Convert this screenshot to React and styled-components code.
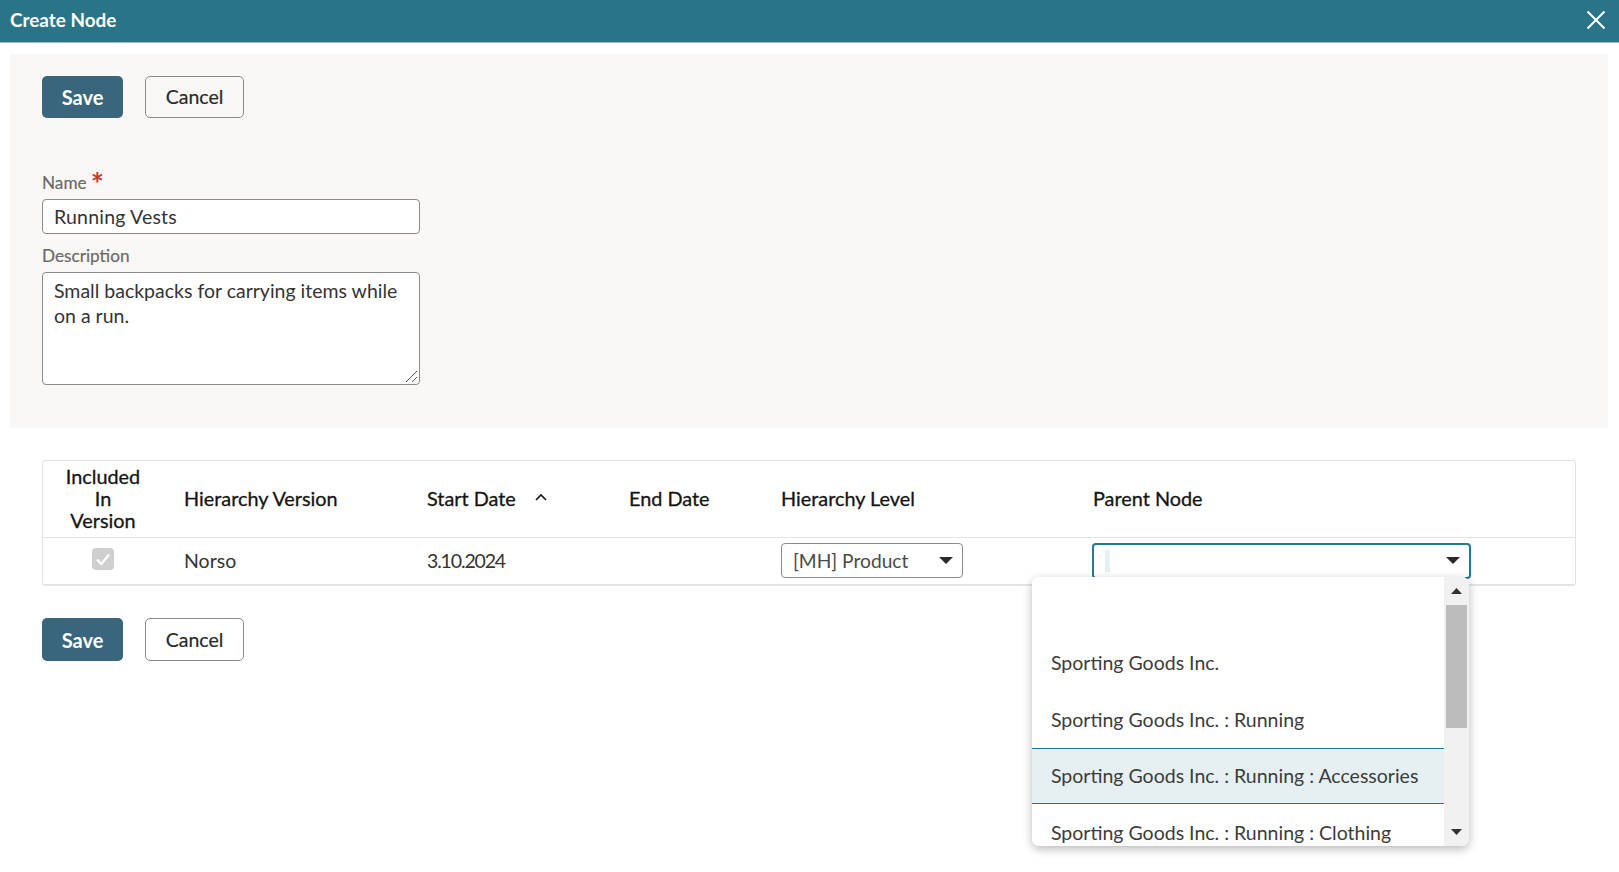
import React from 'react';
import styled, { createGlobalStyle } from 'styled-components';

const GlobalStyle = createGlobalStyle`
  html, body {
    margin: 0;
    padding: 0;
    background: #fff;
    overflow: hidden;
  }
  body {
    font-family: Lato, "Noto Sans", "Liberation Sans", sans-serif;
    color: #353432;
  }
  * {
    box-sizing: border-box;
  }
`;

const Page = styled.div`
  width: 1619px;
  height: 872px;
  display: flex;
  flex-direction: column;
`;

const TitleBar = styled.header`
  height: 43px;
  flex: none;
  display: flex;
  align-items: center;
  justify-content: space-between;
  padding: 0 13px 2px 10px;
  background: #2a7488;
  border-bottom: 1px solid #9db7c6;
`;

const Title = styled.h1`
  margin: -2px 0 0;
  font-size: 18.9px;
  font-weight: 700;
  color: #fff;
`;

const CloseIcon = styled.svg`
  width: 20px;
  height: 20px;
  display: block;
`;

const FormPanel = styled.section`
  margin: 11px 11px 0 10px;
  height: 374px;
  padding: 22px 32px 0;
  background: #f9f8f6;
`;

const Actions = styled.div`
  display: flex;
  gap: 22px;
`;

const BottomActions = styled(Actions)`
  margin: 32px 0 0 42px;
`;

const SaveButton = styled.button`
  width: 81px;
  height: ${({ $tall }) => ($tall ? '43px' : '42px')};
  padding: 0;
  border: 0;
  border-radius: 5px;
  background: #39667d;
  color: #fff;
  font: 700 20px Lato, sans-serif;
`;

const CancelButton = styled.button`
  width: 99px;
  height: ${({ $tall }) => ($tall ? '43px' : '42px')};
  padding: ${({ $tall }) => ($tall ? '0' : '0 0 2px')};
  border: 1px solid #8c8b88;
  border-radius: 5px;
  background: ${({ $tall }) => ($tall ? '#fff' : '#f9f8f6')};
  color: #2b2a28;
  font: 400 19.5px Lato, sans-serif;
  -webkit-text-stroke: 0.2px #2b2a28;
`;

const NameField = styled.div`
  margin-top: 52px;
`;

const Label = styled.div`
  height: 29px;
  font-size: 17.2px;
  color: #6b6a67;
  display: flex;
  align-items: flex-end;
  padding-bottom: 6px;
  -webkit-text-stroke: 0.2px #6b6a67;
`;

const Required = styled.span`
  color: #c0392b;
  font-size: 31px;
  font-weight: 700;
  line-height: 20px;
  margin-left: 4px;
  align-self: flex-start;
  margin-top: 3px;
  -webkit-text-stroke: 0;
`;

const TextBox = styled.div`
  width: 378px;
  height: 35px;
  padding: 0 11px;
  background: #fff;
  border: 1px solid #8c8b88;
  border-radius: 4px;
  display: flex;
  align-items: center;
  font-size: 19.5px;
  letter-spacing: 0.2px;
`;

const DescriptionLabel = styled(Label)`
  margin-top: 8px;
  height: 30px;
`;

const TextArea = styled.div`
  position: relative;
  width: 378px;
  height: 113px;
  padding: 5px 11px;
  background: #fff;
  border: 1px solid #8c8b88;
  border-radius: 4px;
  font-size: 19.5px;
  line-height: 25px;
`;

const Grip = styled.svg`
  position: absolute;
  right: 1px;
  bottom: 1px;
  width: 13px;
  height: 13px;
`;

const TableCard = styled.section`
  margin: 32px 0 0 42px;
  width: 1534px;
  height: 126px;
  border: 1px solid #e4e3e1;
  border-bottom-width: 2px;
  border-radius: 4px;
`;

const Row = styled.div`
  display: grid;
  grid-template-columns: 122px 243px 202px 152px 312px 1fr;
  align-items: center;
  height: ${({ $head }) => ($head ? '77px' : '47px')};
  border-bottom: ${({ $head }) => ($head ? '1px solid #e4e3e1' : '0')};
`;

const HeadCell = styled.div`
  padding: ${({ $center }) => ($center ? '0 2px 2px 0' : '0 0 2px 19px')};
  font-size: 19.85px;
  line-height: 22px;
  color: #161513;
  display: flex;
  align-items: center;
  text-align: ${({ $center }) => ($center ? 'center' : 'left')};
  justify-content: ${({ $center }) => ($center ? 'center' : 'flex-start')};
  -webkit-text-stroke: 0.3px #161513;
`;

const Cell = styled.div`
  padding: ${({ $center }) => ($center ? '0 2px 0 0' : '0 0 0 19px')};
  margin-top: -2px;
  font-size: 19.5px;
  letter-spacing: ${({ $date }) => ($date ? '-1.15px' : '0')};
  display: flex;
  justify-content: ${({ $center }) => ($center ? 'center' : 'flex-start')};
`;

const SortIcon = styled.svg`
  width: 12px;
  height: 8px;
  margin: -2px 0 0 19px;
`;

const CheckIcon = styled.svg`
  width: 22px;
  height: 22px;
  display: block;
  margin-top: -3px;
`;

const SelectCell = styled.div`
  position: relative;
  padding-left: ${({ $parent }) => ($parent ? '18px' : '19px')};
  display: flex;
`;

const Select = styled.div`
  width: ${({ $wide }) => ($wide ? '379px' : '182px')};
  height: ${({ $wide }) => ($wide ? '36px' : '35px')};
  padding: 0 11px;
  margin-top: -2px;
  background: #fff;
  border: ${({ $wide }) => ($wide ? '2px solid #227a95' : '1px solid #8c8b88')};
  border-radius: 4px;
  display: flex;
  align-items: center;
  justify-content: space-between;
  font-size: 19.2px;
  color: #4a4946;
`;

const Caret = styled.svg`
  width: 14px;
  height: 7px;
  flex: none;
  margin-right: -2px;
`;

const Cursor = styled.span`
  width: 5px;
  height: 22px;
  background: #e4f0f2;
`;

const Dropdown = styled.div`
  position: absolute;
  top: 32px;
  left: -42px;
  width: 437px;
  height: 269px;
  background: #fff;
  border-radius: 7px;
  box-shadow: 0 3px 10px rgba(0, 0, 0, 0.28);
  display: flex;
  overflow: hidden;
  z-index: 2;
`;

const Options = styled.div`
  flex: 1;
  min-width: 0;
`;

const Option = styled.div`
  height: ${({ $blank }) => ($blank ? '58px' : '56.5px')};
  padding-left: 19px;
  display: flex;
  align-items: center;
  font-size: 19.5px;
  color: #3d3c39;
  white-space: nowrap;
  background: ${({ $active }) => ($active ? '#e6f0f3' : '#fff')};
  border-top: ${({ $active }) => ($active ? '1px solid #227a95' : '0')};
  border-bottom: ${({ $active }) => ($active ? '1px solid #227a95' : '0')};
`;

const ScrollBar = styled.div`
  width: 25px;
  flex: none;
  background: #f1f1f1;
  padding: 11px 2px 0;
  display: flex;
  flex-direction: column;
  align-items: center;
`;

const ScrollArrow = styled.svg`
  width: 11px;
  height: 6px;
  flex: none;
`;

const ScrollThumb = styled.div`
  width: 21px;
  height: 123px;
  margin-top: 11px;
  background: #bcbcbc;
`;

const ScrollDown = styled(ScrollArrow)`
  margin-top: auto;
  margin-bottom: 11px;
`;

const options = [
  'Sporting Goods Inc.',
  'Sporting Goods Inc. : Running',
  'Sporting Goods Inc. : Running : Accessories',
  'Sporting Goods Inc. : Running : Clothing',
];

const DownCaret = () => (
  <Caret viewBox="0 0 14 7">
    <path d="M0 0h14L7 7z" fill="#2b2a28" />
  </Caret>
);

const App = () => (
  <Page>
    <GlobalStyle />
    <TitleBar>
      <Title>Create Node</Title>
      <CloseIcon viewBox="0 0 20 20">
        <path d="M1.5 1.5l17 17M18.5 1.5l-17 17" stroke="#fff" strokeWidth="2" fill="none" />
      </CloseIcon>
    </TitleBar>

    <FormPanel>
      <Actions>
        <SaveButton>Save</SaveButton>
        <CancelButton>Cancel</CancelButton>
      </Actions>
      <NameField>
        <Label>
          Name<Required>*</Required>
        </Label>
        <TextBox>Running Vests</TextBox>
      </NameField>
      <DescriptionLabel>Description</DescriptionLabel>
      <TextArea>
        Small backpacks for carrying items while on a run.
        <Grip viewBox="0 0 13 13">
          <path d="M1 12L12 1M7 12l5-5" stroke="#555" strokeWidth="1" fill="none" />
        </Grip>
      </TextArea>
    </FormPanel>

    <TableCard>
      <Row $head>
        <HeadCell $center>Included<br />In<br />Version</HeadCell>
        <HeadCell>Hierarchy Version</HeadCell>
        <HeadCell>
          Start Date
          <SortIcon viewBox="0 0 12 8">
            <path d="M1 7l5-5 5 5" stroke="#161513" strokeWidth="1.6" fill="none" />
          </SortIcon>
        </HeadCell>
        <HeadCell>End Date</HeadCell>
        <HeadCell>Hierarchy Level</HeadCell>
        <HeadCell>Parent Node</HeadCell>
      </Row>
      <Row>
        <Cell $center>
          <CheckIcon viewBox="0 0 22 22">
            <rect width="22" height="22" rx="4" fill="#cfcfcf" />
            <path d="M5 11.5l4.5 4.5L17 6.5" stroke="#fff" strokeWidth="2.2" fill="none" />
          </CheckIcon>
        </Cell>
        <Cell>Norso</Cell>
        <Cell $date>3.10.2024</Cell>
        <Cell />
        <SelectCell>
          <Select>
            [MH] Product
            <DownCaret />
          </Select>
        </SelectCell>
        <SelectCell $parent>
          <Select $wide>
            <Cursor />
            <DownCaret />
          </Select>
          <Dropdown>
            <Options>
              <Option $blank />
              {options.map((option, index) => (
                <Option key={option} $active={index === 2}>{option}</Option>
              ))}
            </Options>
            <ScrollBar>
              <ScrollArrow viewBox="0 0 11 6">
                <path d="M0 6h11L5.5 0z" fill="#333" />
              </ScrollArrow>
              <ScrollThumb />
              <ScrollDown viewBox="0 0 11 6">
                <path d="M0 0h11L5.5 6z" fill="#333" />
              </ScrollDown>
            </ScrollBar>
          </Dropdown>
        </SelectCell>
      </Row>
    </TableCard>

    <BottomActions>
      <SaveButton $tall>Save</SaveButton>
      <CancelButton $tall>Cancel</CancelButton>
    </BottomActions>
  </Page>
);

export default App;
